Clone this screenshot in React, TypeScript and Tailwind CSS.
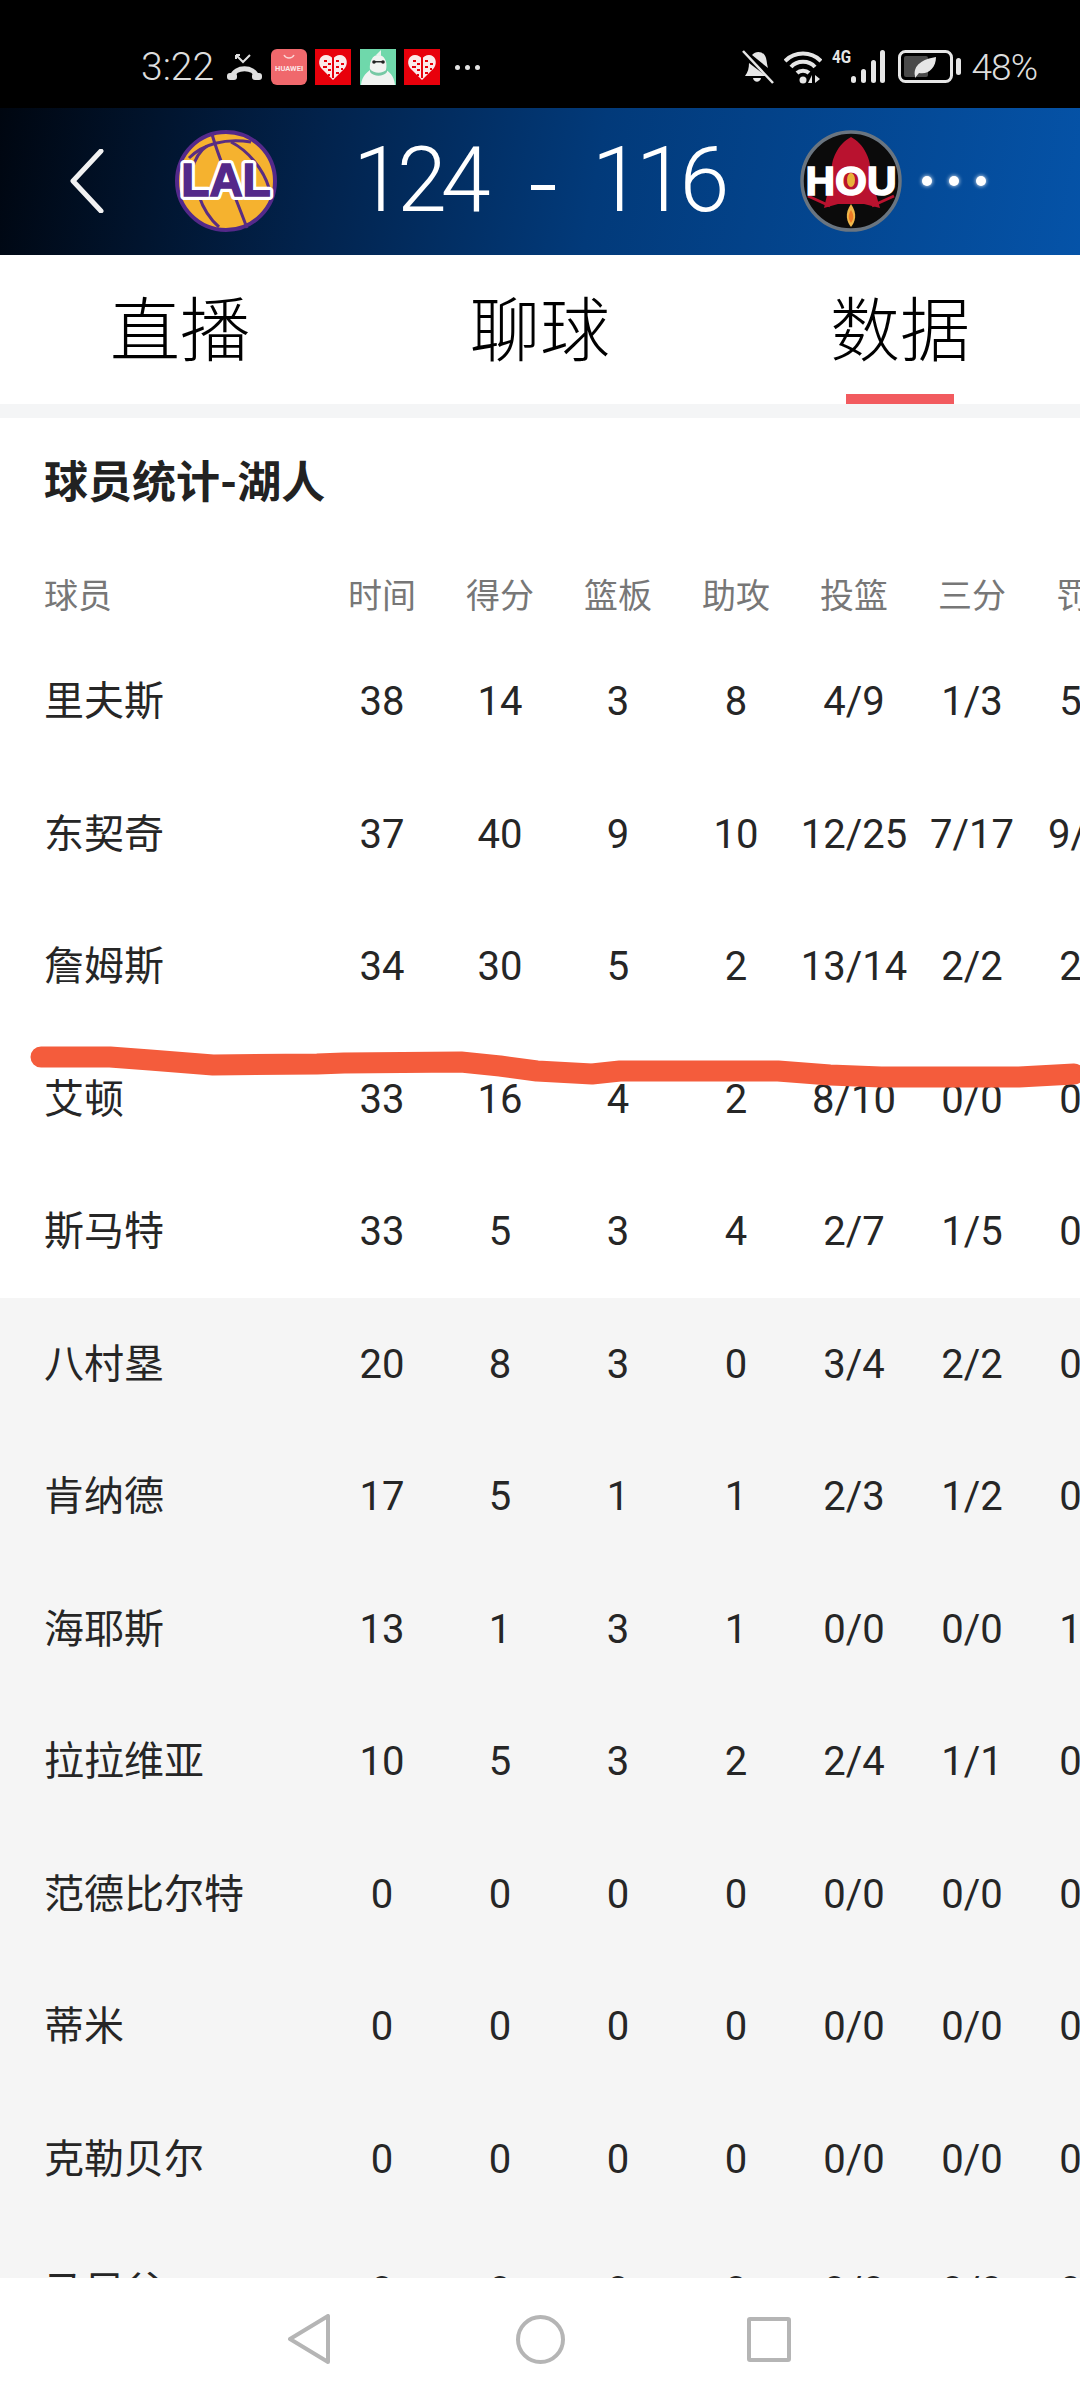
const columns = ["时间", "得分", "篮板", "助攻", "投篮", "三分", "罚球"];

const starters = [
  ["里夫斯", "38", "14", "3", "8", "4/9", "1/3", "5/6"],
  ["东契奇", "37", "40", "9", "10", "12/25", "7/17", "9/10"],
  ["詹姆斯", "34", "30", "5", "2", "13/14", "2/2", "2/2"],
  ["艾顿", "33", "16", "4", "2", "8/10", "0/0", "0/0"],
  ["斯马特", "33", "5", "3", "4", "2/7", "1/5", "0/0"],
];

const bench = [
  ["八村塁", "20", "8", "3", "0", "3/4", "2/2", "0/0"],
  ["肯纳德", "17", "5", "1", "1", "2/3", "1/2", "0/0"],
  ["海耶斯", "13", "1", "3", "1", "0/0", "0/0", "1/2"],
  ["拉拉维亚", "10", "5", "3", "2", "2/4", "1/1", "0/0"],
  ["范德比尔特", "0", "0", "0", "0", "0/0", "0/0", "0/0"],
  ["蒂米", "0", "0", "0", "0", "0/0", "0/0", "0/0"],
  ["克勒贝尔", "0", "0", "0", "0", "0/0", "0/0", "0/0"],
  ["马尼谷", "0", "0", "0", "0", "0/0", "0/0", "0/0"],
];

function PlayerRow({ row }: { row: string[] }) {
  return (
    <div className="flex h-[132.5px] items-center whitespace-nowrap pt-[2px] text-[40px] text-[#262626]">
      <div className="w-[323px] shrink-0 pl-[44px]">{row[0]}</div>
      {row.slice(1).map((value, i) => (
        <div key={i} className="w-[118px] shrink-0 text-center">
          {value}
        </div>
      ))}
    </div>
  );
}

function HeartTile() {
  return (
    <svg width="36" height="36" viewBox="0 0 36 36">
      <rect width="36" height="36" fill="#e8000b" />
      <path d="M18 31 L6 19 C2 13 5 6 11 6 C14 6 17 8 18 10 C19 8 22 6 25 6 C31 6 34 13 30 19 Z" fill="#fbeaea" />
      <g fill="#e8000b">
        <rect x="17" y="8" width="2" height="21" />
        <rect x="9" y="11" width="3" height="2" />
        <rect x="13" y="14" width="3" height="2" />
        <rect x="8" y="17" width="4" height="2" />
        <rect x="13" y="20" width="3" height="2" />
        <rect x="21" y="11" width="3" height="2" />
        <rect x="26" y="14" width="3" height="2" />
        <rect x="21" y="17" width="3" height="2" />
        <rect x="26" y="19" width="2" height="2" />
        <rect x="21" y="23" width="3" height="2" />
        <rect x="13" y="25" width="2" height="2" />
      </g>
    </svg>
  );
}

function StatusLeft() {
  return (
    <div className="flex items-center">
      <span className="text-[39px] leading-none font-light text-[#dddddd]">3:22</span>
      <svg className="ml-[13px]" width="35" height="28" viewBox="0 0 35 28" fill="none">
        <path d="M9 2 L16 9 L23 2 M9 2 H13 M9 2 V6" stroke="#e0e0e0" strokeWidth="2" />
        <path d="M5 24 C8 13 27 13 30 24" stroke="#e0e0e0" strokeWidth="5" />
        <rect x="0" y="20" width="10" height="7" rx="3" fill="#e0e0e0" />
        <rect x="25" y="20" width="10" height="7" rx="3" fill="#e0e0e0" />
      </svg>
      <div className="ml-[9px] flex h-[36px] w-[36px] flex-col items-center rounded-[6px] bg-[#f0686c] pt-[5px]">
        <svg width="14" height="6" viewBox="0 0 14 6" fill="none">
          <path d="M2 1 C4 5 10 5 12 1" stroke="#fbd5d5" strokeWidth="1.5" />
        </svg>
        <span className="mt-[5px] text-[7.5px] leading-none font-bold text-[#fbe4e4]">HUAWEI</span>
      </div>
      <div className="ml-[8px]">
        <HeartTile />
      </div>
      <svg className="ml-[9px]" width="36" height="36" viewBox="0 0 36 36">
        <rect width="36" height="36" fill="#6fd8ab" />
        <path d="M1 36 C2 26 8 23 10 21 C9 12 13 6 18 6 C24 6 28 12 26 21 C29 23 34 26 35 36 Z" fill="#f1f3f1" />
        <path d="M16 6 L21 1 L21 7 Z" fill="#e9f3ee" />
        <rect x="14" y="12" width="9" height="1.5" fill="#2a2a2a" />
        <circle cx="14" cy="13" r="1.8" fill="#222222" />
        <circle cx="23" cy="13" r="1.8" fill="#222222" />
        <path d="M10 20 C14 25 23 25 27 20 L27 23 C23 28 14 28 10 23 Z" fill="#77c9a5" />
      </svg>
      <div className="ml-[8px]">
        <HeartTile />
      </div>
      <div className="ml-[15px] flex gap-[5px]">
        <span className="h-[5px] w-[5px] rounded-full bg-[#e5e5e5]" />
        <span className="h-[5px] w-[5px] rounded-full bg-[#e5e5e5]" />
        <span className="h-[5px] w-[5px] rounded-full bg-[#e5e5e5]" />
      </div>
    </div>
  );
}

function StatusRight() {
  return (
    <div className="flex items-center">
      <svg width="32" height="34" viewBox="0 0 32 34" fill="none">
        <path d="M3 26 C6 22 7 18 7 13 L24 26 Z" fill="#e6e6e6" />
        <path d="M10 5 C14 0 22 1 24 8 C25 12 25 15 26 18 L10 5 Z" fill="#e6e6e6" />
        <path d="M1 1 L31 33" stroke="#e6e6e6" strokeWidth="2.5" />
        <path d="M11 28 H19 C18 33 12 33 11 28 Z" fill="#e6e6e6" />
      </svg>
      <svg className="ml-[10px]" width="38" height="34" viewBox="0 0 38 34" fill="none">
        <path d="M1 11 C11 1 27 1 37 11" stroke="#e6e6e6" strokeWidth="4" />
        <path d="M7 17 C13 10 25 10 31 17" stroke="#e6e6e6" strokeWidth="4" />
        <path d="M13 23 C16 20 22 20 25 23" stroke="#e6e6e6" strokeWidth="4" />
        <circle cx="19" cy="30" r="3.5" fill="#e6e6e6" />
        <path d="M28 25 V33 H24 Z M31 25 V33 L36 29 Z" fill="#e6e6e6" />
      </svg>
      <div className="relative ml-[10px] h-[34px] w-[53px]">
        <span className="absolute top-[-3px] left-0 origin-left scale-x-[0.8] text-[19px] leading-[20px] font-bold text-[#e6e6e6]">4G</span>
        <svg className="absolute right-0 bottom-0" width="34" height="34" viewBox="0 0 34 34">
          <rect x="0" y="26" width="5" height="7" rx="2.5" fill="#e6e6e6" />
          <rect x="10" y="19" width="5" height="14" rx="2.5" fill="#e6e6e6" />
          <rect x="20" y="10" width="5" height="23" rx="2.5" fill="#e6e6e6" />
          <rect x="29" y="0" width="5" height="33" rx="2.5" fill="#e6e6e6" />
        </svg>
      </div>
      <svg className="ml-[13px]" width="63" height="34" viewBox="0 0 63 34" fill="none">
        <rect x="1.5" y="1.5" width="52" height="30" rx="6" stroke="#e6e6e6" strokeWidth="3" />
        <rect x="6" y="6" width="24" height="21" rx="2" fill="#4a4a4a" />
        <path d="M17 26 C15 15 25 9 38 7 C38 18 30 25 21 23 L17 28 Z" fill="#e6e6e6" />
        <rect x="58" y="8" width="5" height="17" rx="2.5" fill="#e6e6e6" />
      </svg>
      <span className="ml-[11px] text-[37px] leading-none font-light tracking-[-1px] text-[#dddddd]">48%</span>
    </div>
  );
}

function LakersLogo() {
  return (
    <svg width="102" height="102" viewBox="0 0 102 102" fill="none">
      <circle cx="51" cy="51" r="49" fill="#f5b22f" stroke="#54298a" strokeWidth="4" />
      <g stroke="#5a2d82" strokeWidth="3">
        <path d="M14 28 C28 14 50 8 76 12" />
        <path d="M37 4 C44 30 58 60 72 98" />
        <path d="M56 12 C72 20 88 38 94 58" />
        <path d="M24 66 C28 78 36 90 44 97" />
        <path d="M17 40 C20 28 26 20 32 16" />
      </g>
      <text
        x="51"
        y="66"
        textAnchor="middle"
        fontFamily="'Liberation Sans', sans-serif"
        fontSize="46"
        fontWeight="900"
        fill="#ffffff"
        stroke="#ffffff"
        strokeWidth="8"
        strokeLinejoin="round"
      >
        LAL
      </text>
      <text
        x="51"
        y="66"
        textAnchor="middle"
        fontFamily="'Liberation Sans', sans-serif"
        fontSize="46"
        fontWeight="900"
        fill="#54298a"
        stroke="#54298a"
        strokeWidth="1.5"
      >
        LAL
      </text>
    </svg>
  );
}

function RocketsLogo() {
  return (
    <svg width="102" height="102" viewBox="0 0 102 102" fill="none">
      <circle cx="51" cy="51" r="49" fill="#0b0b0b" stroke="#6a7580" strokeWidth="3.5" />
      <path d="M51 7 C64 14 72 30 70 44 L80 78 L64 74 L38 74 L24 78 L32 44 C30 30 38 14 51 7 Z" fill="#b9122f" />
      <path d="M8 66 L30 76 M94 66 L72 76" stroke="#b9122f" strokeWidth="3" />
      <path d="M51 74 C58 84 55 92 51 97 C47 92 44 84 51 74 Z" fill="#f0b84a" />
      <path d="M51 80 C55 86 53 90 51 93 C49 90 47 86 51 80 Z" fill="#ee7a26" />
      <text
        x="51"
        y="65"
        textAnchor="middle"
        fontFamily="'Liberation Sans', sans-serif"
        fontSize="41"
        fontWeight="900"
        fill="#ffffff"
        stroke="#ffffff"
        strokeWidth="1.5"
      >
        HOU
      </text>
      <ellipse cx="51" cy="50" rx="4" ry="7" fill="#e8b23a" />
    </svg>
  );
}

export default function App() {
  return (
    <div className="relative flex h-[2400px] w-[1080px] flex-col overflow-hidden bg-white font-[Roboto,'Noto_Sans_CJK_SC',sans-serif]">
      {/* status bar */}
      <div className="flex h-[108px] shrink-0 items-center justify-between bg-black pt-[26px] pr-[43px] pl-[141px]">
        <StatusLeft />
        <StatusRight />
      </div>

      {/* match header */}
      <div className="flex h-[147px] shrink-0 items-center bg-[linear-gradient(100deg,#000610_0%,#02234d_30%,#023a7a_55%,#0553a8_100%)] pb-[1px] pl-[70px] text-white">
        <svg width="34" height="64" viewBox="0 0 34 64" fill="none">
          <path d="M31 2 L3 32 L31 62" stroke="#f2f2f2" strokeWidth="5" strokeLinecap="round" strokeLinejoin="round" />
        </svg>
        <div className="ml-[71px]">
          <LakersLogo />
        </div>
        <div className="ml-[76px] flex items-center text-[90px] leading-none font-light tracking-[-6px]">
          <span>124</span>
          <span className="ml-[46px] h-[5px] w-[24px] translate-y-[6px] bg-white" />
          <span className="ml-[37px]">116</span>
        </div>
        <div className="ml-[76px]">
          <RocketsLogo />
        </div>
        <div className="ml-[20px] flex gap-[17px]">
          <span className="h-[10px] w-[10px] rounded-full bg-white shadow-[0_0_4px_#ffffff]" />
          <span className="h-[10px] w-[10px] rounded-full bg-white shadow-[0_0_4px_#ffffff]" />
          <span className="h-[10px] w-[10px] rounded-full bg-white shadow-[0_0_4px_#ffffff]" />
        </div>
      </div>

      {/* tabs */}
      <div className="flex h-[149px] shrink-0 text-[70px] font-light text-black">
        <div className="flex w-[360px] justify-center pt-[37px] leading-[80px]">直播</div>
        <div className="flex w-[360px] justify-center pt-[37px] leading-[80px]">聊球</div>
        <div className="relative flex w-[360px] justify-center pt-[37px] leading-[80px]">
          数据
          <span className="absolute bottom-0 left-[126px] h-[10px] w-[108px] bg-[#f25b5f]" />
        </div>
      </div>
      <div className="h-[14px] shrink-0 bg-[#f4f5f6]" />

      {/* stats table */}
      <div className="min-h-0 flex-1 overflow-hidden">
        <div className="pt-[32px] pl-[44px] text-[44px] leading-[66px] font-bold text-[#222222]">球员统计-湖人</div>
        <div className="mt-[41px] flex h-[78px] items-center whitespace-nowrap text-[34px] text-[#777777]">
          <div className="w-[323px] shrink-0 pl-[44px]">球员</div>
          {columns.map((label) => (
            <div key={label} className="w-[118px] shrink-0 text-center">
              {label}
            </div>
          ))}
        </div>
        {starters.map((row) => (
          <PlayerRow key={row[0]} row={row} />
        ))}
        <div className="bg-[#f5f5f5]">
          {bench.map((row) => (
            <PlayerRow key={row[0]} row={row} />
          ))}
        </div>
      </div>

      {/* navigation bar */}
      <div className="flex h-[122px] shrink-0 items-center bg-white pl-[288px]">
        <svg width="42" height="50" viewBox="0 0 42 50" fill="none">
          <path d="M40 2 V48 L2 25 Z" stroke="#b5b5b5" strokeWidth="4" strokeLinejoin="round" />
        </svg>
        <div className="ml-[186px] h-[49px] w-[49px] rounded-full border-[4px] border-[#b5b5b5]" />
        <div className="ml-[182px] h-[45px] w-[44px] rounded-[3px] border-[4px] border-[#b5b5b5]" />
      </div>

      {/* hand drawn marker stroke on top of the screenshot */}
      <svg className="pointer-events-none absolute inset-0" width="1080" height="2400" fill="none">
        <path
          d="M41 1057 L110 1057 L150 1060 L213 1065 L317 1064 L344 1063 L461 1062 L500 1066 L537 1071 L592 1074 L620 1071 L778 1071 L830 1075 L881 1077 L1019 1077 L1074 1074"
          stroke="#f45c3c"
          strokeWidth="21"
          strokeLinecap="round"
          strokeLinejoin="round"
        />
      </svg>
    </div>
  );
}
